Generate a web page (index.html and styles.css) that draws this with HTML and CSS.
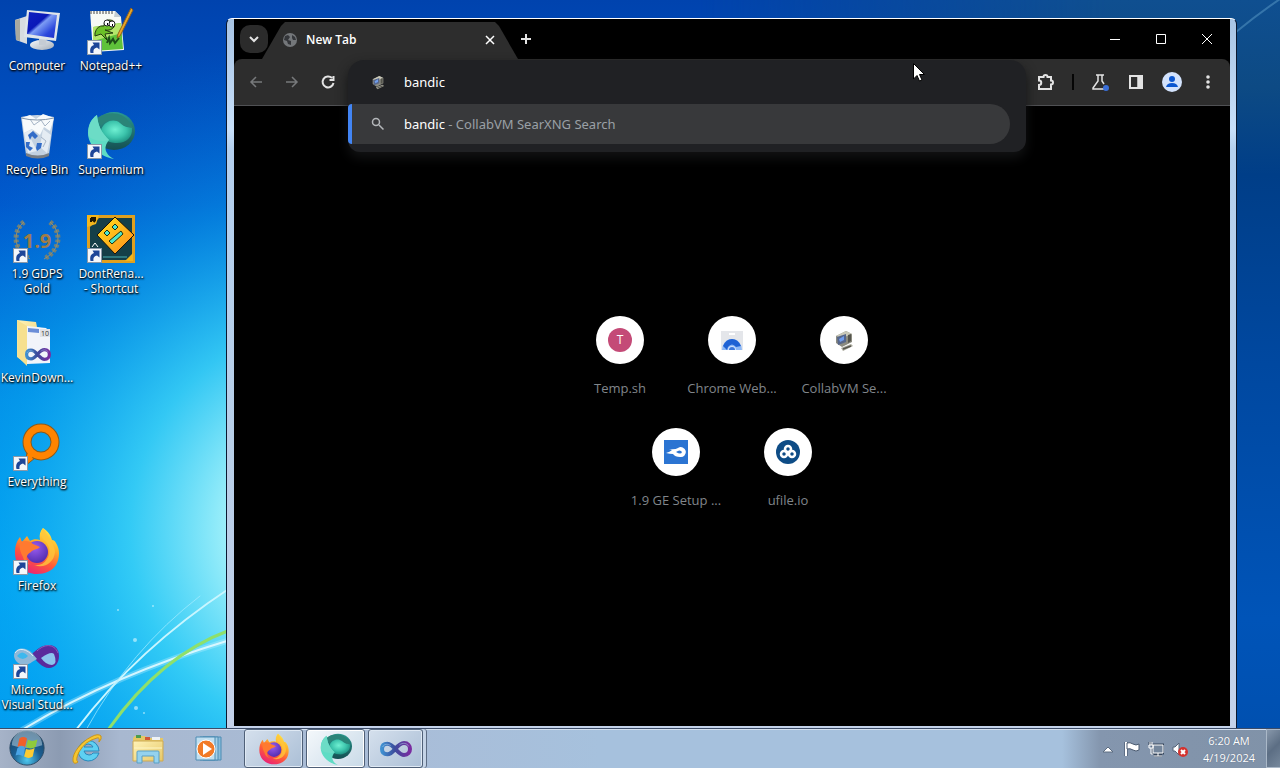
FILE: index.html
```html
<!DOCTYPE html>
<html lang="en">
<head>
    <meta charset="UTF-8">
    <meta name="viewport" content="width=device-width, initial-scale=1.0">
    <title>New Tab</title>
    <link rel="stylesheet" href="styles.css">
</head>
<body>
    <!-- shared drawings -->
    <svg class="defs" aria-hidden="true">
        <defs>
            <linearGradient id="gScreen" x1="0" y1="0" x2="1" y2="1">
                <stop offset="0" stop-color="#1022c0"/><stop offset=".4" stop-color="#0a18b8"/><stop offset=".48" stop-color="#7c9cf4"/><stop offset=".75" stop-color="#2c48dc"/><stop offset="1" stop-color="#1c2cc8"/>
            </linearGradient>
            <linearGradient id="gGrey" x1="0" y1="0" x2="1" y2="1">
                <stop offset="0" stop-color="#f6f8fa"/><stop offset="1" stop-color="#a3adb8"/>
            </linearGradient>
            <radialGradient id="gTeal" cx=".45" cy=".4" r=".6">
                <stop offset="0" stop-color="#6ff0d2"/><stop offset=".6" stop-color="#3cc4ac"/><stop offset="1" stop-color="#1f9484"/>
            </radialGradient>
            <linearGradient id="gTealDark" x1="0" y1="0" x2="0" y2="1">
                <stop offset="0" stop-color="#2b9a90"/><stop offset="1" stop-color="#154f52"/>
            </linearGradient>
            <linearGradient id="gFox" x1=".8" y1="0" x2=".3" y2="1">
                <stop offset="0" stop-color="#fff04a"/><stop offset=".35" stop-color="#ffae28"/><stop offset=".65" stop-color="#ff5a38"/><stop offset="1" stop-color="#e8207a"/>
            </linearGradient>
            <radialGradient id="gGlobe" cx=".4" cy=".3" r=".8">
                <stop offset="0" stop-color="#9a5cf0"/><stop offset="1" stop-color="#4a28a8"/>
            </radialGradient>
            <linearGradient id="gVs" x1="0" y1="0" x2="1" y2="0">
                <stop offset="0" stop-color="#3f8fd0"/><stop offset=".45" stop-color="#3b4c9c"/><stop offset="1" stop-color="#7a2ca0"/>
            </linearGradient>
            <linearGradient id="gFolder" x1="0" y1="0" x2="1" y2="1">
                <stop offset="0" stop-color="#fff3b8"/><stop offset="1" stop-color="#e6c766"/>
            </linearGradient>
            <linearGradient id="gGd" x1="0" y1="0" x2="1" y2="1">
                <stop offset="0" stop-color="#ffe21a"/><stop offset="1" stop-color="#ff8a1e"/>
            </linearGradient>
        </defs>
        <symbol id="arrow" viewBox="0 0 15 15">
            <rect x=".5" y=".5" width="14" height="14" fill="#f4f7fb" stroke="#8a98a8"/>
            <path d="M3.5 13C2.500 8.500 4 6 7 5L5.500 2.500H12.500V9.500L10 7.500C7 8 6 10 6.500 13Z" fill="#1e4698"/>
        </symbol>
        <symbol id="supermium" viewBox="0 0 48 48">
            <ellipse cx="27" cy="20" rx="21" ry="19" fill="url(#gTealDark)"/>
            <path d="M10 7C20 0 36 0 43 12C46 17 47 18 44 17C39 15 36 15 31 11C24 8 18 10 14 15Z" fill="#2a8478"/>
            <path d="M14 19C17 10 27 7 33 12C38 17 42 16 45 17C46 27 38 33 28 32C19 31 14 27 14 19Z" fill="url(#gTeal)"/>
            <path d="M10 4C11 16 15 22 22 29C19 33 17 37 20 42C21 44 23 46 27 48C14 46 1 35 1 22C1 14 4 8 10 4Z" fill="#5fdcc4"/>
            <path d="M10 4C11 16 15 22 22 29C15 31 8 30 2 26C0 18 3 9 10 4Z" fill="#6cdcc6"/>
        </symbol>
        <symbol id="firefox" viewBox="0 0 48 48">
            <path d="M30 1C36 5 38 9 39 13C41 13 42 14 43 16C47 22 47 31 43 38C39 44 32 47 24 47C11 47 2 38 2 26C2 20 3 15 7 10L9 15L14 9L17 14C20 12 24 12 27 13C26 8 27 4 30 1Z" fill="url(#gFox)"/>
            <circle cx="24" cy="25" r="11" fill="url(#gGlobe)"/>
            <path d="M7 15C13 13 17 14 20 17L27 20C24 23 20 22 18 25C12 28 12 34 18 38C13 36 11 34 10 30C7 25 6 20 7 15Z" fill="#ff7a30"/>
            <path d="M31 13C37 18 38 26 34 32C31 37 26 39 21 38C31 42 41 36 42 25C42 19 37 12 30 1C27 6 28 10 31 13Z" fill="#ffc63c" opacity=".8"/>
        </symbol>
        <symbol id="vs" viewBox="0 0 48 28">
            <path d="M24 15C19 9 15 6 11 6C6 6 3 9 3 14C3 19 6 22 11 22C21 22 25 5 36 5C42 5 45 9 45 14C45 19 42 23 36 23C31 23 28 19 24 15Z" fill="none" stroke="url(#gVs)" stroke-width="6"/>
            <path d="M4 11C6 6 12 6 16 9M29 8C34 4 41 5 43 10" fill="none" stroke="#b8dcf4" stroke-width="1" opacity=".7"/>
        </symbol>
        <symbol id="vm" viewBox="0 0 24 24">
            <path d="M4 8L14 3L20 6V14L10 19L4 15Z" fill="#8b8b80"/>
            <path d="M4 8L14 3L20 6L10 10Z" fill="#c9c8b8"/>
            <path d="M5 9L14 6V14L6 17Z" fill="#56668a"/>
            <path d="M7 11L12 8V12L8 14Z" fill="#6f9cec"/>
            <path d="M16 7L19 6V13L16 15Z" fill="#55554d"/>
            <path d="M9 20L19 16L21 18L11 23Z" fill="#aaa99c"/>
            <path d="M11 21L19 18" stroke="#55554d"/>
        </symbol>
    </svg>

    <main class="desktop">
        <svg class="wallpaper" viewBox="0 0 1280 728" preserveAspectRatio="none" aria-hidden="true">
            <defs>
                <linearGradient id="sky" x1="0" y1="0" x2="0" y2="1">
                    <stop offset="0" stop-color="#0043ae"/><stop offset=".28" stop-color="#0058cc"/><stop offset=".55" stop-color="#008ee8"/><stop offset=".8" stop-color="#00a6f6"/><stop offset="1" stop-color="#00a2f4"/>
                </linearGradient>
                <radialGradient id="glow" gradientUnits="userSpaceOnUse" cx="340" cy="530" r="500">
                    <stop offset="0" stop-color="#c8fbfc"/><stop offset=".22" stop-color="#a0f0fa"/><stop offset=".42" stop-color="#3cd2f6" stop-opacity=".85"/><stop offset=".68" stop-color="#0aa5ee" stop-opacity=".45"/><stop offset="1" stop-color="#0070d8" stop-opacity="0"/>
                </radialGradient>
                <linearGradient id="rightSky" x1="0" y1="0" x2="0" y2="1">
                    <stop offset="0" stop-color="#0f4f90"/><stop offset=".12" stop-color="#0d4a84"/><stop offset=".24" stop-color="#003e88"/><stop offset=".5" stop-color="#0048a0"/><stop offset=".85" stop-color="#0054b8"/><stop offset="1" stop-color="#0050b0"/>
                </linearGradient>
                <linearGradient id="fade" x1="0" y1="0" x2="1" y2="0">
                    <stop offset="0" stop-color="#fff" stop-opacity="0"/><stop offset=".7" stop-color="#fff"/>
                </linearGradient>
                <mask id="rightMask"><rect x="700" width="580" height="728" fill="url(#fade)"/></mask>
            </defs>
            <rect width="1280" height="728" fill="url(#sky)"/>
            <rect width="1280" height="728" fill="url(#glow)"/>
            <rect x="700" width="580" height="728" fill="url(#rightSky)" mask="url(#rightMask)"/>
            <path d="M1236 32Q1258 14 1280 -1" fill="none" stroke="#5c9cc8" stroke-width="2" opacity=".5"/>
            <g fill="none" stroke-linecap="round">
                <path d="M22 730Q110 676 230 640" stroke="#bdf0ff" stroke-width="6" opacity=".35"/>
                <path d="M22 730Q110 676 230 640" stroke="#e2faff" stroke-width="2" opacity=".9"/>
                <path d="M76 730Q136 650 230 588" stroke="#c8f6ff" stroke-width="2"/>
                <path d="M86 730Q130 650 200 596" stroke="#a8ecff" stroke-width="1" opacity=".7"/>
                <path d="M108 730Q160 656 230 630" stroke="#8fe06a" stroke-width="3"/>
            </g>
            <g fill="#dcfaff" opacity=".6">
                <circle cx="135" cy="640" r="2"/><circle cx="118" cy="610" r="1"/><circle cx="153" cy="606" r="1"/><circle cx="136" cy="708" r="2"/><circle cx="144" cy="713" r="1"/>
            </g>
        </svg>

        <nav class="icons" aria-label="Desktop">
            <a class="icon" href="#">
                <svg viewBox="0 0 48 48" aria-hidden="true">
                    <path d="M2 13L14 9V37L3 33Z" fill="#d8dce0"/><path d="M2 13L7 12V34L3 33Z" fill="#a8a9a0"/>
                    <ellipse cx="29" cy="38" rx="12" ry="5" fill="url(#gGrey)"/><path d="M26 29H34L33 38H26Z" fill="#c5ccd4"/>
                    <path d="M14 3L47 6L43 34L11 30Z" fill="#dfe5ea"/><path d="M16 5L44 8L41 31L14 27Z" fill="url(#gScreen)"/>
                </svg>
                <span>Computer</span>
            </a>
            <a class="icon" href="#">
                <svg viewBox="0 0 48 48" aria-hidden="true">
                    <path d="M8 6Q24 2 41 6L36 44Q25 50 13 44Z" fill="#c3d1e0"/>
                    <path d="M9 7L17 4L23 8L30 3L41 7L37 20L31 16L27 24L19 18L11 22Z" fill="#f7fafc"/>
                    <path d="M11 22L20 18L18 28L24 40L15 42ZM30 18L38 24L34 42L27 36Z" fill="#eef3f7" opacity=".8"/>
                    <path d="M17 8L21 14L28 9L32 15L37 10M28 26L33 30L30 36" fill="none" stroke="#a5b4c6"/>
                    <path d="M8 7Q24 11 41 7" fill="none" stroke="#8596a8"/>
                    <path d="M15 24L20 20L25 25L22 28L19 25L17 29ZM13 31H17L16 35L20 37L17 40L13 36ZM23 37L24 32L29 32L28 37L24 40Z" fill="#326cc8"/>
                    <path d="M13 42Q25 47 36 42L36 45Q25 50 13 45Z" fill="#797e84"/>
                </svg>
                <span>Recycle Bin</span>
            </a>
            <a class="icon" href="#">
                <svg viewBox="0 0 48 48" aria-hidden="true">
                    <g fill="none" stroke="#6f8079" stroke-width="5" stroke-dasharray="3 2"><path d="M11 7C0 16-1 34 17 44M37 7C48 16 49 34 31 44"/></g>
                    <g fill="none" stroke="#9b906a" stroke-width="1"><path d="M11 7C0 16-1 34 17 44M37 7C48 16 49 34 31 44"/></g>
                    <text class="plain" x="24" y="33" text-anchor="middle" font-size="20" font-weight="700" fill="#a07c48">1.9</text>
                    <use href="#arrow" x="0" y="33" width="15" height="15"/>
                </svg>
                <span>1.9 GDPS Gold</span>
            </a>
            <a class="icon" href="#">
                <svg viewBox="0 0 48 48" aria-hidden="true">
                    <path d="M4 1L23 3L24 8L32 10V40L13 45L4 38Z" fill="url(#gFolder)"/>
                    <path d="M14 7L33 9L37 13V44L14 45Z" fill="#f1f4fa"/><path d="M15 9L26 10V14L15 13Z" fill="#6b8ed8"/>
                    <path d="M4 1L14 7V47L5 38Z" fill="#f6e08f"/>
                    <rect x="27" y="10" width="10" height="8" fill="#e0e2e8"/><text class="plain" x="32" y="17" text-anchor="middle" font-size="7" fill="#333">10</text>
                    <use href="#vs" x="12" y="27" width="26" height="17"/>
                </svg>
                <span>KevinDown...</span>
            </a>
            <a class="icon" href="#">
                <svg viewBox="0 0 48 48" aria-hidden="true">
                    <path d="M14 29L12 43L22 35Z" fill="#ff8400" stroke="#8a5a1c"/>
                    <circle cx="28" cy="19" r="14" fill="none" stroke="#8a5a1c" stroke-width="9"/>
                    <circle cx="28" cy="19" r="14" fill="none" stroke="#ff8400" stroke-width="7"/>
                    <path d="M15 29L13 40L21 33Z" fill="#ff8400"/>
                    <use href="#arrow" x="0" y="33" width="15" height="15"/>
                </svg>
                <span>Everything</span>
            </a>
            <a class="icon" href="#">
                <svg viewBox="0 0 48 48" aria-hidden="true"><use href="#firefox" width="48" height="48"/><use href="#arrow" x="0" y="33" width="15" height="15"/></svg>
                <span>Firefox</span>
            </a>
            <a class="icon" href="#">
                <svg viewBox="0 0 48 48" aria-hidden="true">
                    <path d="M18 24C24 18 29 14 36 14C43 14 46 19 46 25C46 32 42 37 36 37C29 37 24 30 18 24Z" fill="#5a2a9c"/>
                    <path d="M28 27Q38 20 41 23Q45 33 39 34Q33 34 28 27Z" fill="#8cc4ee"/>
                    <path d="M1 25C1 16 13 15 19 22L24 28L19 31C13 36 2 34 1 25Z" fill="#8fb8d8"/>
                    <path d="M4 25Q9 18 15 25Q10 31 4 25Z" fill="#3cb8ee"/>
                    <path d="M2 22C6 16 14 18 20 25" fill="none" stroke="#dcecf6" stroke-width="1"/>
                    <path d="M24 20C31 13 41 12 45 22" fill="none" stroke="#8a62c0" stroke-width="1"/>
                    <use href="#arrow" x="0" y="33" width="15" height="15"/>
                </svg>
                <span>Microsoft Visual Stud...</span>
            </a>
            <a class="icon" href="#">
                <svg viewBox="0 0 48 48" aria-hidden="true">
                    <path d="M3 4H28L34 10L37 43L6 45Z" fill="#f7faf5"/><path d="M6 20L34 16L36 42L6 44Z" fill="#5fc23a"/><path d="M6 20L34 16L35 26L6 34Z" fill="#b4e66a"/>
                    <path d="M28 4L27 10H34Z" fill="#c3ccd0"/>
                    <path d="M4 4V7M7 4V7M10 4V7M13 4V7M16 4V7M19 4V7M22 4V7M25 4V7" stroke="#444"/>
                    <path d="M8 26Q10 18 17 19Q17 12 23 13Q29 13 27 20Q24 24 18 23L26 26L18 27L20 33L14 27L8 29Z" fill="#6cc028" stroke="#243c10"/>
                    <circle cx="20" cy="16" r="3" fill="#fff" stroke="#222"/><circle cx="25" cy="17" r="3" fill="#fff" stroke="#222"/><path d="M20 17H21M25 18H26" stroke="#000" stroke-width="2"/>
                    <path d="M20 36L22 31L23 36L26 32L28 36L32 31" fill="none" stroke="#1e4c18" stroke-width="2"/>
                    <path d="M44 1L46 3L33 29L30 31L31 27Z" fill="#e8a82a" stroke="#94601a" stroke-width="1"/>
                    <use href="#arrow" x="0" y="33" width="15" height="15"/>
                </svg>
                <span>Notepad++</span>
            </a>
            <a class="icon" href="#">
                <svg viewBox="0 0 48 48" aria-hidden="true"><use href="#supermium" width="48" height="48"/><use href="#arrow" x="0" y="33" width="15" height="15"/></svg>
                <span>Supermium</span>
            </a>
            <a class="icon" href="#">
                <svg viewBox="0 0 48 48" aria-hidden="true">
                    <rect width="48" height="48" fill="#e0a01e"/><path d="M3 12L12 3H45V45H3Z" fill="#153f48"/><path d="M16 42H40" stroke="#49b0b4"/>
                    <path d="M0 0H12L9 9L0 12Z" fill="#f3b61c"/><path d="M4 3H8V5H6L8 7M4 3V7" fill="none" stroke="#221800" stroke-width="2"/>
                    <path d="M38 46L46 38V46Z" fill="#f3b61c"/>
                    <path d="M28 2L47 20L28 39L10 20Z" fill="url(#gGd)" stroke="#1c1408" stroke-width="1"/>
                    <g fill="#4ee6cc" stroke="#1c3010" stroke-width="1"><path d="M20 15L23 18L20 21L17 18ZM28 9L31 12L28 15L25 12ZM22 26L34 16L36 19L25 29Z"/></g>
                    <path d="M5 32L8 28L11 32" fill="none" stroke="#fff"/>
                    <use href="#arrow" x="0" y="33" width="15" height="15"/>
                </svg>
                <span>DontRena...<br>- Shortcut</span>
            </a>
        </nav>

        <section class="window" aria-label="Browser">
            <div class="browser">
                <div class="tabstrip">
                    <button class="tab-search" aria-label="Search tabs"><svg viewBox="0 0 16 16"><path d="M4 6L8 10L12 6"/></svg></button>
                    <div class="tab">
                        <svg class="favicon" viewBox="0 0 16 16" aria-hidden="true"><circle cx="8" cy="8" r="7" fill="#74777a"/><path d="M3 4L6 3L8 5L6 8L9 9L9 13L6 12L5 9L2 8ZM10 3L13 5L14 8L11 8L10 6Z" fill="#34363a"/></svg>
                        <span class="tab-title">New Tab</span>
                        <button class="tab-close" aria-label="Close tab"><svg viewBox="0 0 16 16"><path d="M4 4L12 12M12 4L4 12"/></svg></button>
                    </div>
                    <button class="tab-new" aria-label="New tab"><svg viewBox="0 0 16 16"><path d="M8 3V13M3 8H13"/></svg></button>
                    <div class="controls">
                        <button aria-label="Minimize"><svg viewBox="0 0 12 12"><path d="M1 6.500H11"/></svg></button>
                        <button aria-label="Maximize"><svg viewBox="0 0 12 12"><path d="M1.500 1.500H10.500V10.500H1.500Z"/></svg></button>
                        <button aria-label="Close"><svg viewBox="0 0 12 12"><path d="M1 1L11 11M11 1L1 11"/></svg></button>
                    </div>
                </div>

                <div class="toolbar">
                    <button class="tool off" aria-label="Back"><svg viewBox="0 0 16 16"><path d="M14 8H3M8 3L3 8L8 13"/></svg></button>
                    <button class="tool off" aria-label="Forward"><svg viewBox="0 0 16 16"><path d="M2 8H13M8 3L13 8L8 13"/></svg></button>
                    <button class="tool" aria-label="Reload"><svg viewBox="0 0 16 16"><path class="bold" d="M12 4A5.500 5.500 0 1 0 13.500 9M13.500 2V6H9.500"/></svg></button>
                    <div class="address">
                        <div class="omnibox">
                            <label class="omni-row">
                                <svg viewBox="0 0 24 24" aria-hidden="true"><use href="#vm" width="24" height="24"/></svg>
                                <input type="text" value="bandic" aria-label="Address and search bar">
                            </label>
                            <a class="omni-row suggestion" href="#">
                                <svg viewBox="0 0 16 16" aria-hidden="true"><g fill="none" stroke="#b4b7ba" stroke-width="1.500"><circle cx="6" cy="6" r="3.500"/><path d="M9 9L13.500 13.500"/></g></svg>
                                <span><b>bandic</b> - CollabVM SearXNG Search</span>
                            </a>
                        </div>
                    </div>
                    <button class="tool" aria-label="Extensions"><svg class="big" viewBox="0 0 20 20"><path class="bold" d="M3 5H7.500A2 2 0 0 1 11.500 5H15V8.500A2 2 0 0 1 15 12.500V17H3V13C6 13 6 8.500 3 8.500Z"/></svg></button>
                    <span class="divider"></span>
                    <button class="tool" aria-label="Experiments"><svg class="big" viewBox="0 0 20 20"><path d="M6 3H14M8 3V9L3 16V17H15M12 3V9L14 12"/><circle cx="16" cy="16" r="3" fill="#3a6fd8" stroke="none"/></svg></button>
                    <button class="tool" aria-label="Side panel"><svg class="big" viewBox="0 0 20 20"><path class="bold" d="M4 4H16V16H4Z"/><path d="M12 4H16V16H12Z" fill="#e3e3e3"/></svg></button>
                    <button class="tool" aria-label="Profile"><svg class="big" viewBox="0 0 20 20"><circle cx="10" cy="10" r="10" fill="#d3e3fd" stroke="none"/><path d="M4 15Q5 11 10 11Q15 11 16 15Z" fill="#0b57d0" stroke="none"/><circle cx="10" cy="7" r="3" fill="#0b57d0" stroke="none"/></svg></button>
                    <button class="tool" aria-label="Menu"><svg viewBox="0 0 16 16"><g fill="#e3e3e3" stroke="none"><circle cx="8" cy="3" r="1.800"/><circle cx="8" cy="8" r="1.800"/><circle cx="8" cy="13" r="1.800"/></g></svg></button>
                </div>

                <div class="page">
                    <div class="tiles">
                        <a class="tile" href="#">
                            <span class="disc"><svg viewBox="0 0 24 24" aria-hidden="true"><circle cx="12" cy="12" r="12" fill="#c44a77"/><text x="12" y="16" text-anchor="middle" font-size="12" fill="#fff">T</text></svg></span>
                            <span>Temp.sh</span>
                        </a>
                        <a class="tile" href="#">
                            <span class="disc"><svg viewBox="0 0 24 24" aria-hidden="true"><path d="M1 3H23V22H1Z" fill="#e4e6ea"/><path d="M9 5H15V7H9Z" fill="#fff"/><path d="M2 22A10 11 0 0 1 22 22Z" fill="#8db8f6"/><path d="M3 18Q6 11 12 11Q18 11 21 18L16 19Q12 14 8 19L7 22Z" fill="#1f62d4"/><path d="M8 22A4 4 0 0 1 16 22Z" fill="#cfe0fa"/><path d="M9 22A3 3 0 0 1 15 22Z" fill="#3c78dc"/></svg></span>
                            <span>Chrome Web...</span>
                        </a>
                        <a class="tile" href="#">
                            <span class="disc"><svg viewBox="0 0 24 24" aria-hidden="true"><use href="#vm" width="24" height="24"/></svg></span>
                            <span>CollabVM Se...</span>
                        </a>
                        <a class="tile" href="#">
                            <span class="disc"><svg viewBox="0 0 24 24" aria-hidden="true"><rect width="24" height="24" fill="#2b74d2"/><path d="M2 13Q6 12 8 10L5 9Q11 10 14 8A5 5 0 1 1 16 17Q11 17 9 14Q6 14 2 13Z" fill="#fff"/><path d="M12 12Q16 9 18 12Q17 15 12 12Z" fill="#2b74d2"/></svg></span>
                            <span>1.9 GE Setup ...</span>
                        </a>
                        <a class="tile" href="#">
                            <span class="disc"><svg viewBox="0 0 24 24" aria-hidden="true"><circle cx="12" cy="12" r="12" fill="#0e4c86"/><g fill="none" stroke="#fff" stroke-width="2.500"><circle cx="12" cy="9" r="3"/><circle cx="8" cy="14" r="3"/><circle cx="16" cy="14" r="3"/></g></svg></span>
                            <span>ufile.io</span>
                        </a>
                    </div>
                </div>
            </div>
        </section>

        <svg class="cursor" viewBox="0 0 12 19" aria-hidden="true"><path d="M.5 .5V16L4 12.500L6.500 18L9 17L6.500 11.500H11.500Z" fill="#fff" stroke="#000"/></svg>
    </main>

    <footer class="taskbar">
        <button class="start" aria-label="Start">
            <svg viewBox="0 0 40 40">
                <defs><radialGradient id="orb" cx=".5" cy=".85" r=".8"><stop offset="0" stop-color="#4fc8ee"/><stop offset=".5" stop-color="#1c5f92"/><stop offset="1" stop-color="#164468"/></radialGradient></defs>
                <circle cx="20" cy="20" r="18" fill="url(#orb)" stroke="#2c4a64"/>
                <path d="M4 17A16 16 0 0 1 36 17Q20 23 4 17Z" fill="#d8ecf6" opacity=".45"/>
                <path d="M12 10Q16 7 20 10L18 19Q14 16 10 19Z" fill="#f0602a"/>
                <path d="M21 11Q25 14 31 11L29 19Q24 22 19 19Z" fill="#8fca3c"/>
                <path d="M10 20Q14 17 18 20L16 29Q12 26 8 28Z" fill="#4aa4e6"/>
                <path d="M19 21Q23 23 28 20L26 29Q22 32 17 29Z" fill="#fccb32"/>
            </svg>
        </button>
        <button class="pin" aria-label="Internet Explorer">
            <svg viewBox="0 0 32 32">
                <path d="M7 18A10 10 0 1 1 28 18H13Q14 22 18 22Q21 22 22 20H28Q25 28 17 28Q8 27 7 18ZM13 14H22Q21 11 17 11Q14 11 13 14Z" fill="#5ed0f2" stroke="#2888bc"/>
                <path d="M30 3Q27 0 20 4C10 9 1 20 2 28Q3 32 7 29Q4 27 8 19Q14 8 26 5Q29 4 28 9Q31 6 30 3Z" fill="#f7c62e" stroke="#c8941c" stroke-width="1"/>
            </svg>
        </button>
        <button class="pin" aria-label="Windows Explorer">
            <svg viewBox="0 0 32 32">
                <path d="M1 5L3 3H13L15 5H31V28H1Z" fill="#e5c766"/><path d="M4 2H9V5H4Z" fill="#4a9c50"/><path d="M13 4H18V7H13Z" fill="#d25636"/><path d="M20 4H28V7H20Z" fill="#eef3f6"/>
                <path d="M1 8H31V28H1Z" fill="url(#gFolder)" stroke="#cda952"/><path d="M2 15H30" stroke="#fff7c6"/>
                <path d="M5 30V19Q5 18 6 18H26Q27 18 27 19V30H22V23H10V30Z" fill="#94d2ee" stroke="#5a9fc4"/>
            </svg>
        </button>
        <button class="pin" aria-label="Media Player">
            <svg viewBox="0 0 32 32">
                <path d="M10 4H28V27H10Z" fill="#88bcda" stroke="#4d8cb4"/><path d="M7 4H25V27H7Z" fill="#a5d0e6" stroke="#4d8cb4"/><path d="M3 4H22V27H3Z" fill="#c0dff0" stroke="#4d8cb4"/>
                <circle cx="13" cy="16" r="9" fill="#f27a26" stroke="#fff"/><path d="M10 10L19 16L10 22Z" fill="#fff"/>
            </svg>
        </button>
        <div class="tasks">
            <button class="task" aria-label="Firefox"><svg viewBox="0 0 48 48"><use href="#firefox" width="48" height="48"/></svg></button>
            <button class="task active" aria-label="Supermium"><svg viewBox="0 0 48 48"><use href="#supermium" width="48" height="48"/></svg></button>
            <button class="task stacked" aria-label="Visual Studio"><svg viewBox="0 0 48 28"><use href="#vs" width="48" height="28"/></svg></button>
        </div>
        <div class="tray">
            <button aria-label="Show hidden icons"><svg viewBox="0 0 16 16"><path d="M3 11L8 6L13 11Z" fill="#fff" stroke="#5c6c80"/></svg></button>
            <button aria-label="Action Center"><svg viewBox="0 0 16 16"><path d="M2 1V15" stroke="#36465c" stroke-width="3"/><path d="M2 1V15" stroke="#fff" stroke-width="2"/><path d="M3 2Q6 1 9 3Q12 5 15 3V9Q12 11 9 9Q6 7 3 8Z" fill="#fff" stroke="#4a5a70"/></svg></button>
            <button aria-label="Network"><svg viewBox="0 0 16 16"><g fill="none" stroke="#36465c" stroke-width="3"><path d="M5 4H15V12H5ZM10 12V15M6 15H14M2 1V4"/></g><path d="M5 4H15V12H5Z" fill="#74869c" stroke="#fff"/><path d="M10 12V15M6 15H14M2 1V4M4 1V4M1 4H5V7H1ZM3 7V13H5" fill="none" stroke="#fff"/></svg></button>
            <button aria-label="Volume"><svg viewBox="0 0 16 16"><path d="M1 6H3L7 2V14L3 10H1Z" fill="#fff" stroke="#56657a" stroke-width="1"/><circle cx="11" cy="11" r="5" fill="#d4322e"/><path d="M9 9L13 13M13 9L9 13" stroke="#fff" stroke-width="2"/></svg></button>
        </div>
        <time class="clock" datetime="2024-04-19T06:20"><span>6:20 AM</span><span>4/19/2024</span></time>
        <button class="peek" aria-label="Show desktop"></button>
    </footer>
</body>
</html>
```
FILE: styles.css
```css
* {
    box-sizing: border-box;
}

body {
    margin: 0;
    height: 100vh;
    display: flex;
    flex-direction: column;
    overflow: hidden;
    background: #0058cc;
    font-family: "Open Sans", "Noto Sans", sans-serif;
    font-size: 12px;
}

button {
    display: flex;
    align-items: center;
    justify-content: center;
    margin: 0;
    padding: 0;
    border: 0;
    background: none;
    font: inherit;
    color: inherit;
}

a {
    color: inherit;
    text-decoration: none;
}

svg {
    display: block;
    flex: none;
}

.defs {
    position: absolute;
    width: 0;
    height: 0;
}

/* desktop */
.desktop {
    position: relative;
    flex: 1;
    min-height: 0;
}

.wallpaper {
    position: absolute;
    inset: 0;
    width: 100%;
    height: 100%;
}

.icons {
    position: relative;
    display: grid;
    grid-auto-flow: column;
    grid-template-rows: repeat(7, 104px);
    grid-auto-columns: 74px;
    width: max-content;
}

.icon {
    display: flex;
    flex-direction: column;
    align-items: center;
    gap: 3px;
    padding-top: 7px;
    color: #fff;
    text-align: center;
    line-height: 15px;
    text-shadow: 0 1px 2px #000, 1px 1px 2px #000;
}

.icon svg {
    width: 48px;
    height: 48px;
}

.icon .plain {
    text-shadow: none;
}

/* browser window */
.window {
    position: absolute;
    top: 18px;
    right: 43px;
    bottom: 0;
    left: 226px;
    padding: 0 6px 2px 7px;
    border: 1px solid #0a1830;
    border-top-color: #fff;
    border-bottom: 0;
    border-radius: 6px 6px 0 0;
    background: linear-gradient(#a8c4e4, #c8e0fa 110px, #b4d0ee 130px, #b8cfe8 420px, #c4d2ea);
}

.browser {
    height: 100%;
    display: flex;
    flex-direction: column;
    background: #000;
    color: #e3e3e3;
}

.browser svg {
    width: 16px;
    height: 16px;
    fill: none;
    stroke: #e3e3e3;
    stroke-width: 1.5;
}

.browser svg .bold {
    stroke-width: 2;
}

.tabstrip {
    display: flex;
    align-items: center;
    height: 40px;
    padding-left: 6px;
}

.tab-search {
    width: 28px;
    height: 28px;
    border-radius: 10px;
    background: #2b2b2b;
}

.tab-search svg {
    stroke-width: 2;
}

.tab {
    display: flex;
    align-items: center;
    align-self: flex-end;
    gap: 8px;
    width: 256px;
    height: 37px;
    margin-left: -6px;
    padding: 0 20px 2px;
    clip-path: polygon(0 100%, 19px 4px, 23px 0, 233px 0, 237px 4px, 100% 100%);
    background: #2d2d2d;
}

.browser .favicon,
.browser .disc svg,
.browser .omni-row svg {
    stroke: none;
}

.tab-title {
    flex: 1;
    color: #fff;
    font-weight: 600;
}

.tab-close svg {
    stroke: #fff;
}

.tab-new svg {
    stroke-width: 2;
}

.controls {
    display: flex;
    margin-left: auto;
}

.controls button {
    width: 46px;
    height: 38px;
}

.browser .controls svg {
    width: 12px;
    height: 12px;
    stroke: #fff;
    stroke-width: 1;
}

.toolbar {
    display: flex;
    align-items: center;
    height: 47px;
    padding: 0 4px;
    border-bottom: 1px solid #505154;
    border-radius: 8px 8px 0 0;
    background: #2d2d2d;
}

.tool {
    width: 36px;
    height: 36px;
}

.browser .off svg {
    stroke: #77797b;
}

.browser svg.big {
    width: 20px;
    height: 20px;
}

.divider {
    width: 2px;
    height: 16px;
    margin: 0 8px;
    background: #050505;
}

.address {
    position: relative;
    flex: 1;
    align-self: stretch;
    margin: 0 2px;
}

/* drop-down lies over the toolbar and the page */
.omnibox {
    position: absolute;
    top: 1px;
    right: 0;
    left: 0;
    padding-bottom: 8px;
    border-radius: 16px 16px 12px 12px;
    background: #202124;
    box-shadow: 0 6px 12px #121314;
    font-family: "Noto Sans", "Open Sans", sans-serif;
}

.omni-row {
    display: flex;
    align-items: center;
    gap: 18px;
    height: 44px;
    padding-left: 22px;
    font-size: 13px;
    color: #9aa0a6;
}

.omni-row input {
    flex: 1;
    min-width: 0;
    padding: 0;
    border: 0;
    outline: 0;
    background: none;
    color: #fff;
    font: inherit;
}

.suggestion {
    height: 40px;
    margin-right: 16px;
    padding-left: 18px;
    border-left: 4px solid #4285f4;
    border-radius: 4px 20px 20px 4px;
    background: #38393b;
}

.suggestion b {
    color: #fff;
    font-weight: 400;
}

/* new tab page */
.page {
    flex: 1;
    min-height: 0;
    padding-top: 194px;
}

.tiles {
    display: flex;
    flex-wrap: wrap;
    justify-content: center;
    max-width: 336px;
    margin: 0 auto;
}

.tile {
    display: flex;
    flex-direction: column;
    align-items: center;
    gap: 16px;
    width: 112px;
    height: 112px;
    padding-top: 16px;
    font-size: 13px;
    line-height: 16px;
    white-space: nowrap;
    color: #80868b;
}

.disc {
    display: flex;
    align-items: center;
    justify-content: center;
    width: 48px;
    height: 48px;
    border-radius: 50%;
    background: #fff;
}

.browser .disc svg {
    width: 24px;
    height: 24px;
}

.cursor {
    position: absolute;
    top: 63px;
    left: 913px;
    width: 12px;
    height: 19px;
}

/* taskbar */
.taskbar {
    display: flex;
    align-items: center;
    height: 40px;
    border-top: 1px solid #3c4c68;
    background: linear-gradient(to right, #a6b3c8, #8c9bb2 60px, #a8b8d0 120px, #a9bdd8 400px, #a6c1dd 600px, #a6c1dd calc(100% - 218px), #8496ae calc(100% - 180px), #8092a8);
    box-shadow: inset 0 1px #d4e0f0;
}

.start {
    width: 54px;
    padding-bottom: 2px;
}

.start svg {
    width: 38px;
    height: 38px;
}

.pin {
    width: 61px;
    padding-left: 4px;
}

.pin svg {
    width: 32px;
    height: 32px;
}

.tasks {
    display: flex;
    gap: 3px;
    margin-left: 7px;
}

.task {
    width: 59px;
    height: 39px;
    border: 1px solid #4f6078;
    border-radius: 3px;
    background: linear-gradient(135deg, #d5e0ed, #abbfd6);
    box-shadow: inset 0 0 0 1px #dfe9f4;
}

.task svg {
    width: 32px;
    height: 32px;
}

.task.active {
    background: linear-gradient(135deg, #f4f8fb, #c9dae8);
    box-shadow: inset 0 0 0 1px #fff;
}

.task.stacked {
    width: 55px;
    box-shadow: inset 0 0 0 1px #dfe9f4, 3px 0 0 #c4d3e6, 4px 0 0 #5c6c84;
}

.tray {
    display: flex;
    align-items: center;
    gap: 8px;
    margin: 0 4px 0 auto;
}

.tray svg {
    width: 16px;
    height: 16px;
}

.clock {
    display: flex;
    flex-direction: column;
    width: 74px;
    color: #fff;
    font-size: 11px;
    line-height: 17px;
    text-align: center;
    text-shadow: 0 0 1px #506078;
}

.peek {
    width: 14px;
    height: 39px;
    border: 1px solid #aab8c8;
    border-right: 0;
    background: linear-gradient(135deg, #8797aa, #5c6e84 50%, #76889c);
}
```
